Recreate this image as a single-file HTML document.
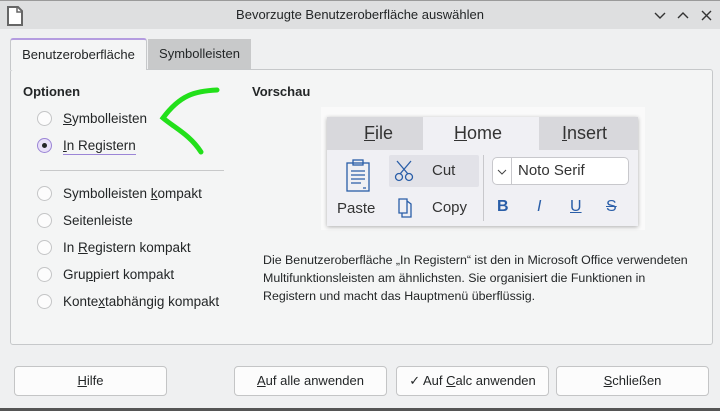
<!DOCTYPE html>
<html><head><style>
*{margin:0;padding:0;box-sizing:border-box}
body{width:720px;height:411px;background:#eff0f1;font-family:"Liberation Sans","DejaVu Sans",sans-serif;font-size:13px;color:#232627;position:relative;overflow:hidden}
.a{position:absolute}
.title{left:0;top:0;width:720px;height:29px;background:#dedfe0;border-top:1px solid #9a9a9a}
.tab{position:absolute;height:32px;line-height:30px;text-align:center;font-size:13px}
.panel{left:10px;top:69px;width:703px;height:276px;background:#f4f5f5;border:1px solid #c6c8ca;border-radius:3px}
.r{position:absolute;width:15px;height:15px;border-radius:50%;border:1px solid #c4c5c6;background:#fcfcfc}
.lbl{position:absolute;font-size:13.5px}
.btn{position:absolute;top:366px;height:30px;background:#fcfcfc;border:1px solid #c4c5c6;border-radius:4px;text-align:center;line-height:28px;font-size:13px}
u{text-decoration:underline}
</style></head><body>
<div class="a title">
 <svg class="a" style="left:6px;top:5px" width="18" height="20"><path d="M2 1h10l4 4v14H2z" fill="#fff" stroke="#666" stroke-width="2"/><path d="M11 1v5h5" fill="none" stroke="#666" stroke-width="1.5"/></svg>
 <div class="a" style="left:0;width:720px;top:6px;text-align:center;font-size:13px">Bevorzugte Benutzeroberfläche auswählen</div>
 <svg class="a" style="left:652px;top:8px" width="66" height="14" fill="none" stroke="#333" stroke-width="1.4"><path d="M3 4l5 5 5-5M26 9l5-5 5 5M50 2l9 9M59 2l-9 9"/></svg>
</div>
<div class="tab" style="left:10px;top:38px;width:137px;background:#f4f5f5;border:1px solid #c6c8ca;border-bottom:none;border-top:2px solid #b49ce0;border-radius:3px 3px 0 0;z-index:2;height:32px">Benutzeroberfläche</div>
<div class="tab" style="left:148px;top:39px;width:103px;background:#c8c9ca;height:30px">Symbolleisten</div>
<div class="a panel"></div>
<div class="lbl" style="left:23px;top:84px;font-weight:bold;font-size:13px">Optionen</div>
<div class="lbl" style="left:252px;top:84px;font-weight:bold;font-size:13px">Vorschau</div>
<div class="r" style="left:37px;top:111px"></div><div class="lbl" style="left:63px;top:111px"><u>S</u>ymbolleisten</div>
<div class="r" style="left:37px;top:138px;border-color:#9b85d6;background:#e8e0f8"><div class="a" style="left:4px;top:4px;width:5px;height:5px;border-radius:50%;background:#232627"></div></div>
<div class="lbl" style="left:63px;top:138px;border-bottom:1px solid #9b85d6;padding-bottom:1px"><u>I</u>n Registern</div>
<div class="a" style="left:40px;top:170px;width:184px;height:1px;background:#c8c9ca"></div>
<div class="r" style="left:37px;top:186px"></div><div class="lbl" style="left:63px;top:186px">Symbolleisten <u>k</u>ompakt</div>
<div class="r" style="left:37px;top:213px"></div><div class="lbl" style="left:63px;top:213px">Seitenleiste</div>
<div class="r" style="left:37px;top:240px"></div><div class="lbl" style="left:63px;top:240px">In <u>R</u>egistern kompakt</div>
<div class="r" style="left:37px;top:267px"></div><div class="lbl" style="left:63px;top:267px">Gru<u>p</u>piert kompakt</div>
<div class="r" style="left:37px;top:294px"></div><div class="lbl" style="left:63px;top:294px">Konte<u>x</u>tabhängig kompakt</div>
<svg class="a" style="left:155px;top:85px" width="70" height="72"><path d="M62 5C40 6 25 10 8 33 20 43 35 50 46 67" fill="none" stroke="#22e01a" stroke-width="5" stroke-linecap="round"/></svg>
<!-- preview -->
<div class="a" style="left:321px;top:107px;width:324px;height:123px;background:#fafafa"></div>
<div class="a" style="left:327px;top:117px;width:311px;height:109px;background:#f0f0f4;box-shadow:0 1px 4px rgba(0,0,0,.3)">
 <div class="a" style="left:0;top:0;width:311px;height:33px;background:#d8d8dc"></div>
 <div class="a" style="left:96px;top:0;width:116px;height:34px;background:#f0f0f4"></div>
 <div class="a" style="left:37px;top:6px;font-size:18px;color:#333"><u>F</u>ile</div>
 <div class="a" style="left:127px;top:6px;font-size:18px;color:#333"><u>H</u>ome</div>
 <div class="a" style="left:235px;top:6px;font-size:18px;color:#333"><u>I</u>nsert</div>
 <div class="a" style="left:62px;top:38px;width:90px;height:32px;background:#e2e2e8;border-radius:2px"></div>
 <svg class="a" style="left:18px;top:42px" width="28" height="34" fill="none" stroke="#2a5ea8" stroke-width="1.3"><rect x="2" y="4" width="22" height="28"/><rect x="8" y="1" width="10" height="5"/><path d="M6 12h14M6 16h14M6 20h14M6 24h10M18 29h3"/></svg>
 <div class="a" style="left:10px;top:83px;font-size:15px;color:#333">Paste</div>
 <svg class="a" style="left:67px;top:43px" width="20" height="22" fill="none" stroke="#2a5ea8" stroke-width="1.3"><path d="M3 1l11 13M17 1L6 14"/><circle cx="5" cy="17" r="3.5"/><circle cx="15" cy="17" r="3.5"/></svg>
 <div class="a" style="left:105px;top:45px;font-size:15px;color:#333">Cut</div>
 <svg class="a" style="left:70px;top:80px" width="16" height="22" fill="none" stroke="#2a5ea8" stroke-width="1.3"><path d="M2 2h8v14H2zM5 16v4h9V7l-4-3"/></svg>
 <div class="a" style="left:105px;top:82px;font-size:15px;color:#333">Copy</div>
 <div class="a" style="left:156px;top:38px;width:1px;height:66px;background:#c8c8cc"></div>
 <div class="a" style="left:165px;top:40px;width:137px;height:28px;background:#fff;border:1px solid #c8c8cc;border-radius:5px"></div>
 <div class="a" style="left:184px;top:41px;width:1px;height:26px;background:#c8c8cc"></div>
 <svg class="a" style="left:169px;top:51px" width="12" height="8" fill="none" stroke="#444"><path d="M2 2l4 4 4-4"/></svg>
 <div class="a" style="left:191px;top:45px;font-size:15px;color:#333">Noto Serif</div>
 <div class="a" style="left:170px;top:81px;font-size:16px;color:#2a5ea8;font-weight:bold">B</div>
 <div class="a" style="left:210px;top:81px;font-size:16px;color:#2a5ea8;font-style:italic">I</div>
 <div class="a" style="left:243px;top:81px;font-size:16px;color:#2a5ea8"><u>U</u></div>
 <div class="a" style="left:279px;top:81px;font-size:16px;color:#2a5ea8"><s>S</s></div>
</div>
<div class="a" style="left:263px;top:251px;width:436px;font-size:12.4px;line-height:18px">Die Benutzeroberfläche „In Registern“ ist den in Microsoft Office verwendeten Multifunktionsleisten am ähnlichsten. Sie organisiert die Funktionen in<br>Registern und macht das Hauptmenü überflüssig.</div>
<div class="btn" style="left:14px;width:153px"><u>H</u>ilfe</div>
<div class="btn" style="left:234px;width:153px"><u>A</u>uf alle anwenden</div>
<div class="btn" style="left:396px;width:153px">✓ Auf <u>C</u>alc anwenden</div>
<div class="btn" style="left:556px;width:153px"><u>S</u>chließen</div>
<div class="a" style="left:0;top:408px;width:720px;height:3px;background:#555"></div>
</body></html>
